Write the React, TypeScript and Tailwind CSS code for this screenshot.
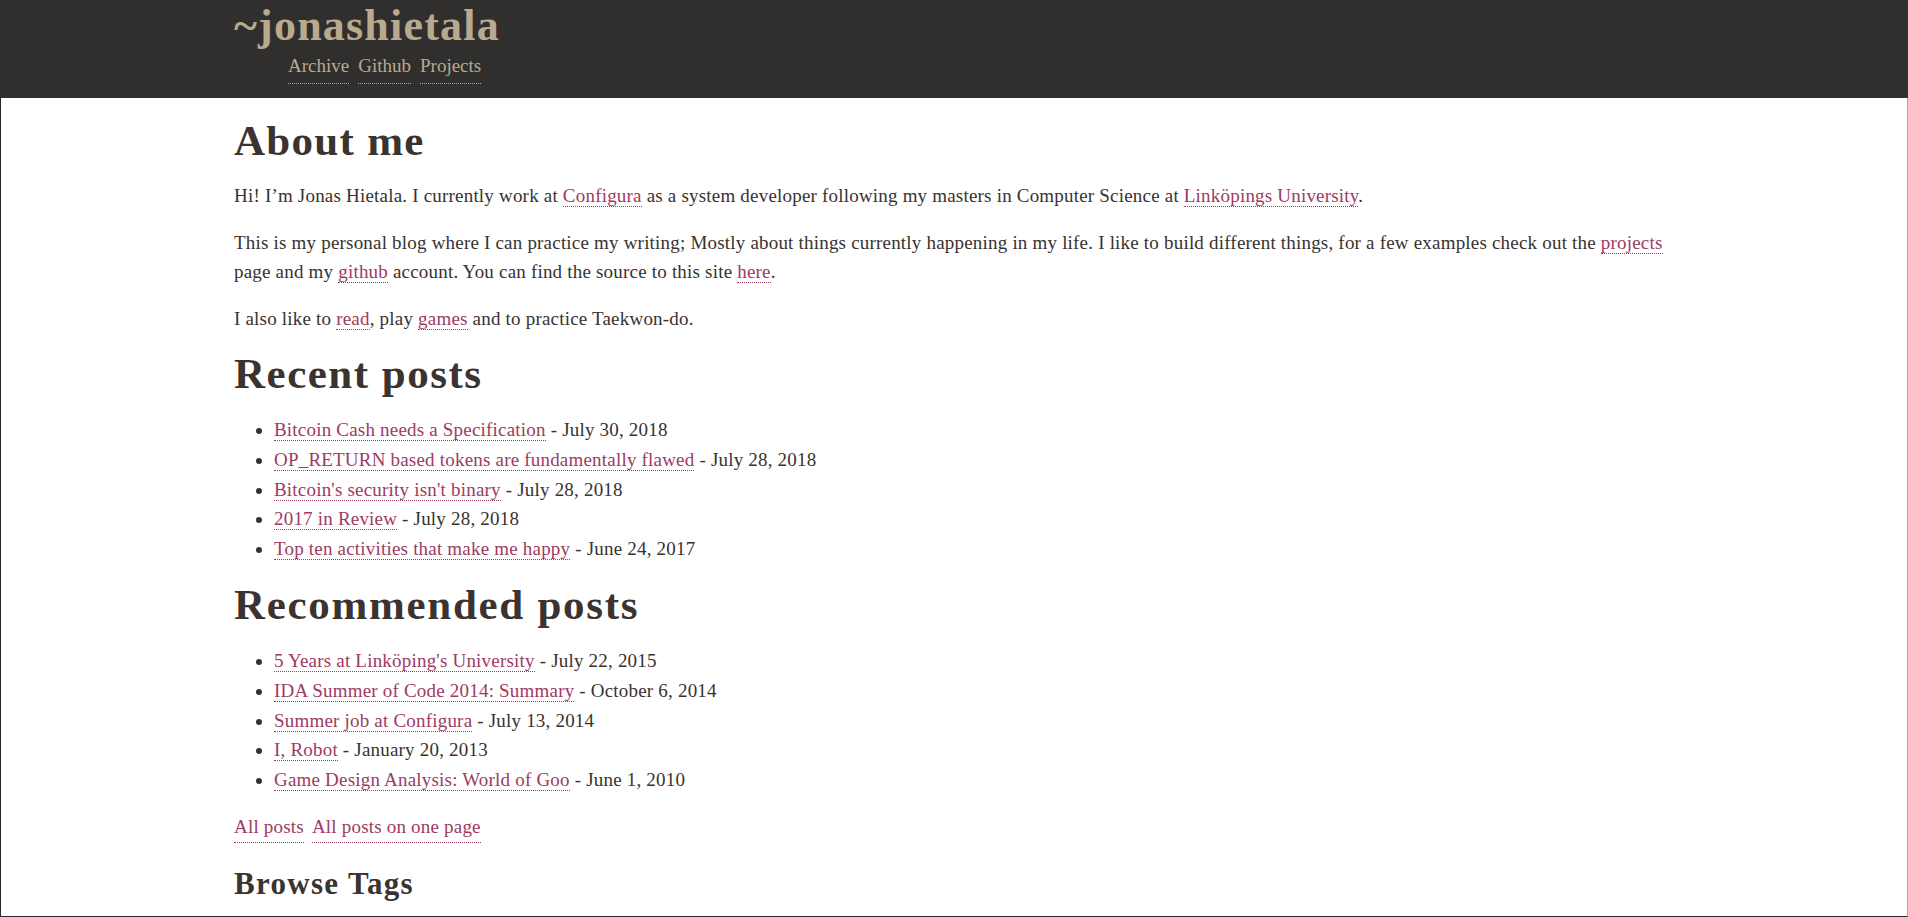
const recentPosts = [
  { title: "Bitcoin Cash needs a Specification", date: "July 30, 2018" },
  { title: "OP_RETURN based tokens are fundamentally flawed", date: "July 28, 2018" },
  { title: "Bitcoin's security isn't binary", date: "July 28, 2018" },
  { title: "2017 in Review", date: "July 28, 2018" },
  { title: "Top ten activities that make me happy", date: "June 24, 2017" },
];

const recommendedPosts = [
  { title: "5 Years at Linköping's University", date: "July 22, 2015" },
  { title: "IDA Summer of Code 2014: Summary", date: "October 6, 2014" },
  { title: "Summer job at Configura", date: "July 13, 2014" },
  { title: "I, Robot", date: "January 20, 2013" },
  { title: "Game Design Analysis: World of Goo", date: "June 1, 2010" },
];

const Link = ({ children }: { children: React.ReactNode }) => (
  <a href="#" className="text-[#9e3a62] border-b border-dotted border-[#9e3a62]">
    {children}
  </a>
);

const PostList = ({ posts }: { posts: { title: string; date: string }[] }) => (
  <ul className="mt-[16.5px] list-disc pl-10 marker:text-[#38322f]">
    {posts.map((p) => (
      <li key={p.title}>
        <Link>{p.title}</Link> - {p.date}
      </li>
    ))}
  </ul>
);

export default function App() {
  return (
    <div className="h-screen overflow-hidden flex flex-col bg-white font-['Liberation_Serif',serif] text-[19px] tracking-[0.2px] leading-[29.7px] text-[#38322f]">
      <header className="h-[98px] shrink-0 bg-[#312f2d]">
        <div className="mx-auto max-w-[1440px] pt-[2px]">
          <h1 className="text-[44px] leading-[48px] font-bold tracking-[1.2px] text-[#b8aa8e]">
            <a href="#">~jonashietala</a>
          </h1>
          <nav className="mt-[4px] pl-[54px] flex gap-[9px] text-[19px] tracking-normal leading-[24px] text-[#b8aa8e]">
            {["Archive", "Github", "Projects"].map((l) => (
              <a key={l} href="#" className="pb-[5px] border-b border-dotted border-[#b8aa8e]">
                {l}
              </a>
            ))}
          </nav>
        </div>
      </header>

      <main className="flex-1 overflow-hidden border-l border-r border-b border-l-[#2a2826] border-r-[#a8a8a8] border-b-[#2a2826]">
        <div className="mx-auto max-w-[1440px] pt-[18px]">
          <h1 className="text-[43px] leading-[50px] font-bold tracking-[1.3px] text-[#3a3330]">About me</h1>
          <p className="mt-[15px]">
            Hi! I’m Jonas Hietala. I currently work at <Link>Configura</Link> as a system developer
            following my masters in Computer Science at <Link>Linköpings University</Link>.
          </p>
          <p className="mt-[17px]">
            This is my personal blog where I can practice my writing; Mostly about things currently
            happening in my life. I like to build different things, for a few examples check out
            the <Link>projects</Link> page and my <Link>github</Link> account. You can find the
            source to this site <Link>here</Link>.
          </p>
          <p className="mt-[17px]">
            I also like to <Link>read</Link>, play <Link>games</Link> and to practice Taekwon-do.
          </p>

          <h1 className="mt-[15px] text-[43px] leading-[50px] font-bold tracking-[1.5px] text-[#3a3330]">
            Recent posts
          </h1>
          <PostList posts={recentPosts} />

          <h1 className="mt-[16px] text-[43px] leading-[50px] font-bold tracking-[1.7px] text-[#3a3330]">
            Recommended posts
          </h1>
          <PostList posts={recommendedPosts} />

          <p className="mt-[17px] flex gap-[8px]">
            <Link>All posts</Link>
            <Link>All posts on one page</Link>
          </p>

          <h2 className="mt-[25px] text-[31px] leading-[32px] font-bold tracking-[1.3px] text-[#3a3330]">
            Browse Tags
          </h2>
        </div>
      </main>
    </div>
  );
}
